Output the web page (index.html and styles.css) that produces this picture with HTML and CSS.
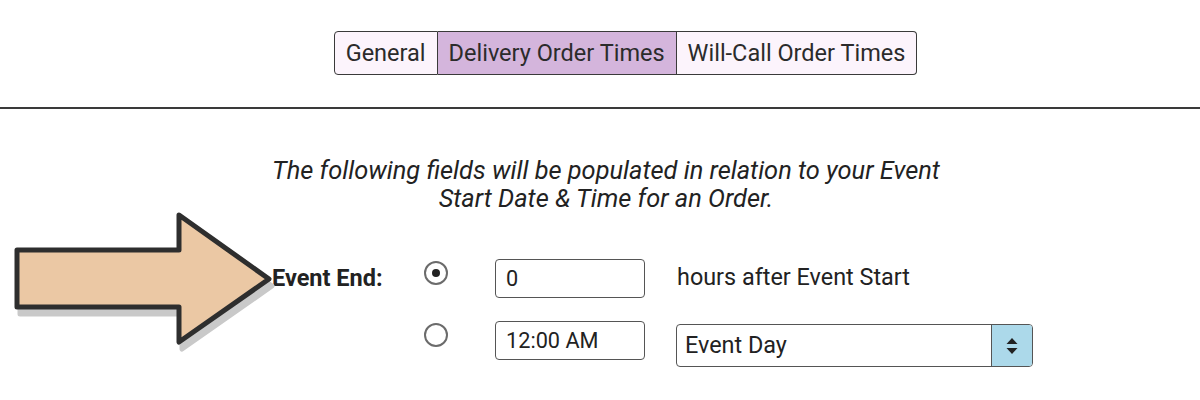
FILE: index.html
```
<!DOCTYPE html>
<html lang="en">

<head>
	<meta charset="UTF-8" />
	<meta name="viewport" content="width=device-width, initial-scale=1.0" />
	<title>Order Times</title>
	<link rel="stylesheet" href="styles.css">
</head>

<body>
	<div class="tabs">
		<a class="tab" href="javascript:;">General</a>
		<a class="tab active" href="javascript:;">Delivery Order Times</a>
		<a class="tab" href="javascript:;">Will-Call Order Times</a>
	</div>

	<div class="divider"></div>

	<p class="intro">The following fields will be populated in relation to your Event Start Date &amp; Time for an Order.</p>

	<div class="form">
		<label class="label">Event End:</label>
		<span class="radio checked"></span>
		<input class="field" type="text" value="0" />
		<span class="hint">hours after Event Start</span>

		<span></span>
		<span class="radio"></span>
		<input class="field" type="text" value="12:00 AM" />
		<div class="select">
			<span class="select-value">Event Day</span>
			<span class="spin">
				<svg width="16" height="22" viewBox="0 0 16 22">
					<path d="M2.5 9 L8 3 L13.5 9 Z" fill="#222" />
					<path d="M2.5 13 L8 19 L13.5 13 Z" fill="#222" />
				</svg>
			</span>
		</div>
	</div>

	<!-- callout arrow pointing at the label -->
	<svg class="pointer" width="300" height="160" viewBox="0 0 300 160">
		<polygon points="20,57 182,57 182,22 272,86 182,149 182,114 20,114"
			fill="#c9c9c9" stroke="#c9c9c9" stroke-width="5" stroke-linejoin="round" />
		<polygon points="17,50 179,50 179,15 269,79 179,142 179,107 17,107"
			fill="#ebc8a4" stroke="#2e2e2e" stroke-width="5" stroke-linejoin="round" />
	</svg>
</body>

</html>
```

FILE: styles.css
```
* {
	margin: 0;
	padding: 0;
	box-sizing: border-box;
}

body {
	font-family: Roboto, "Liberation Sans", sans-serif;
	color: #262626;
	background: #fff;
	position: relative;
}

.tabs {
	display: flex;
	justify-content: center;
	padding: 31px 0 0 51px;
}

.tab {
	display: block;
	height: 44px;
	line-height: 42px;
	padding: 0 11px;
	font-size: 23.5px;
	color: #2b2b2b;
	text-decoration: none;
	background: #fcf4fc;
	border: 1px solid #3a3a3a;
	border-left: none;
}

.tab:first-child {
	border-left: 1px solid #3a3a3a;
	border-radius: 4px 0 0 4px;
}

.tab:last-child {
	border-radius: 0 4px 4px 0;
}

.tab.active {
	background: #d4b5dc;
}

.divider {
	height: 2px;
	margin-top: 32px;
	background: #3a3a3a;
}

.intro {
	width: 700px;
	margin: 47px 0 0 256px;
	text-align: center;
	font-style: italic;
	font-size: 25.4px;
	line-height: 28px;
	color: #222;
}

.form {
	display: grid;
	grid-template-columns: 152px 71px 182px auto;
	row-gap: 23px;
	align-items: start;
	margin: 47px 0 0 272px;
}

.label {
	font-weight: bold;
	font-size: 23.5px;
	line-height: 39px;
	color: #222;
}

.radio {
	width: 24px;
	height: 24px;
	margin-top: 2px;
	border: 2px solid #6b6b6b;
	border-radius: 50%;
	display: flex;
	align-items: center;
	justify-content: center;
}

.form .radio:nth-of-type(2) {
	margin-top: 4px;
}

.radio.checked::after {
	content: "";
	width: 8px;
	height: 8px;
	border-radius: 50%;
	background: #222;
}

.field {
	width: 150px;
	height: 39px;
	padding-left: 10px;
	font-family: inherit;
	font-size: 21.7px;
	color: #222;
	border: 1.5px solid #555;
	border-radius: 4px;
	outline: none;
}

.hint {
	font-size: 23.4px;
	line-height: 36px;
	color: #222;
}

.select {
	display: flex;
	width: 357px;
	height: 43px;
	margin-top: 3px;
	margin-left: -1px;
	border: 1.5px solid #555;
	border-radius: 4px;
	overflow: hidden;
}

.select-value {
	flex: 1;
	padding-left: 8px;
	font-size: 23.4px;
	line-height: 40px;
	color: #222;
}

.spin {
	width: 41px;
	background: #acd9ea;
	border-left: 1.5px solid #555;
	display: flex;
	align-items: center;
	justify-content: center;
}

.pointer {
	position: absolute;
	left: 0;
	top: 200px;
}
```
